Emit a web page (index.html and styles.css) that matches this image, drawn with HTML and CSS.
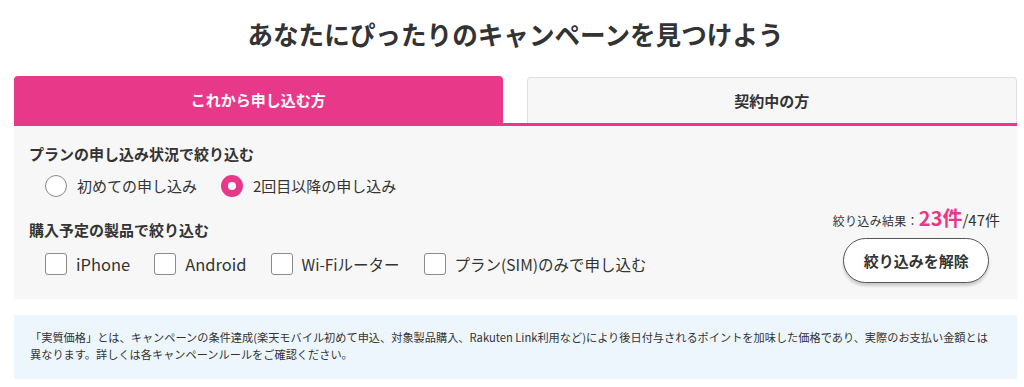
FILE: index.html
```html
<!DOCTYPE html>
<html lang="ja">
<head>
<meta charset="utf-8">
<link rel="stylesheet" href="styles.css">
</head>
<body>
<div class="wrap">
  <h1 class="title">あなたにぴったりのキャンペーンを見つけよう</h1>
  <div class="tabs">
    <div class="tab tab-active">これから申し込む方</div>
    <div class="tab tab-inactive">契約中の方</div>
  </div>
  <div class="panel">
    <div class="filters">
      <div class="heading">プランの申し込み状況で絞り込む</div>
      <div class="options radios">
        <label class="opt"><span class="radio"></span><span>初めての申し込み</span></label>
        <label class="opt"><span class="radio radio-on"></span><span>2回目以降の申し込み</span></label>
      </div>
      <div class="heading heading2">購入予定の製品で絞り込む</div>
      <div class="options checks">
        <label class="opt"><span class="box"></span><span class="latin">iPhone</span></label>
        <label class="opt"><span class="box"></span><span class="latin">Android</span></label>
        <label class="opt"><span class="box"></span><span class="wide">Wi-Fiルーター</span></label>
        <label class="opt"><span class="box"></span><span class="wide">プラン(SIM)のみで申し込む</span></label>
      </div>
    </div>
    <div class="result">
      <div class="count"><span class="count-label">絞り込み結果：</span><span class="count-num">23件</span><span class="count-total">/47件</span></div>
      <button class="reset">絞り込みを解除</button>
    </div>
  </div>
  <div class="notice">「実質価格」とは、キャンペーンの条件達成(楽天モバイル初めて申込、対象製品購入、Rakuten Link利用など)により後日付与されるポイントを加味した価格であり、実際のお支払い金額とは<br>異なります。詳しくは各キャンペーンルールをご確認ください。</div>
</div>
</body>
</html>
```

FILE: styles.css
```css
* { box-sizing: border-box; }
html, body { margin: 0; padding: 0; background: #fff; }
body {
  font-family: "Noto Sans CJK JP", "Noto Sans", sans-serif;
  color: #333;
}
.wrap {
  width: 1003px;
  margin-left: 14px;
}
.title {
  margin: 0;
  padding-top: 16px;
  height: 76px;
  font-size: 25.6px;
  line-height: 36px;
  font-weight: 700;
  text-align: center;
  letter-spacing: 0;
}
.tabs {
  display: flex;
  gap: 24px;
  border-bottom: 3px solid #e8388a;
}
.tab {
  flex: 1;
  height: 47px;
  display: flex;
  align-items: center;
  justify-content: center;
  font-size: 15px;
  font-weight: 700;
  border-radius: 4px 4px 0 0;
}
.tab-active {
  background: #e8388a;
  color: #fff;
}
.tab-inactive {
  margin-top: 1px;
  height: 46px;
  background: #f7f7f7;
  border: 1px solid #e0e0e0;
  border-bottom: none;
  color: #333;
}
.panel {
  background: #f7f7f7;
  height: 173px;
  display: flex;
  justify-content: space-between;
  align-items: flex-end;
  padding: 17px 17px 16px 15px;
}
.filters {
  align-self: flex-start;
}
.heading {
  font-size: 15px;
  font-weight: 700;
  line-height: 22px;
}
.heading2 {
  margin-top: 22px;
}
.options {
  display: flex;
  gap: 24px;
  padding-left: 16px;
  font-size: 15px;
}
.radios { margin-top: 10px; }
.checks { margin-top: 12px; }
.opt {
  display: flex;
  align-items: center;
  gap: 10px;
  height: 22px;
  line-height: 22px;
}
.latin {
  font-size: 16.5px;
}
.wide {
  font-size: 15.5px;
}
.radio {
  width: 22px;
  height: 22px;
  border-radius: 50%;
  border: 1px solid #8a8a8a;
  background: #fff;
  flex: none;
}
.radio-on {
  border: 7px solid #e8388a;
  background: #fff;
}
.box {
  width: 22px;
  height: 22px;
  border-radius: 3px;
  border: 1px solid #8a8a8a;
  background: #fff;
  flex: none;
}
.checks .opt { gap: 9px; }
.result {
  display: flex;
  flex-direction: column;
  align-items: center;
}
.count {
  display: flex;
  align-items: baseline;
  line-height: 24px;
}
.count-label {
  font-size: 12px;
  letter-spacing: 0.3px;
}
.count-num {
  font-size: 20px;
  font-weight: 700;
  color: #e8388a;
}
.count-total {
  font-size: 15px;
}
.reset {
  margin-top: 5px;
  width: 146px;
  height: 45px;
  border-radius: 23px;
  border: 1px solid #555;
  background: #fff;
  box-shadow: 0 3px 3px rgba(0, 0, 0, 0.18);
  font-family: inherit;
  font-size: 15px;
  font-weight: 700;
  color: #333;
  padding: 0;
}
.notice {
  margin-top: 16px;
  background: #eef6fd;
  padding: 14px 16px 14px 16px;
  font-size: 11.2px;
  line-height: 17px;
  color: #333;
  height: 64px;
  white-space: nowrap;
}
```
